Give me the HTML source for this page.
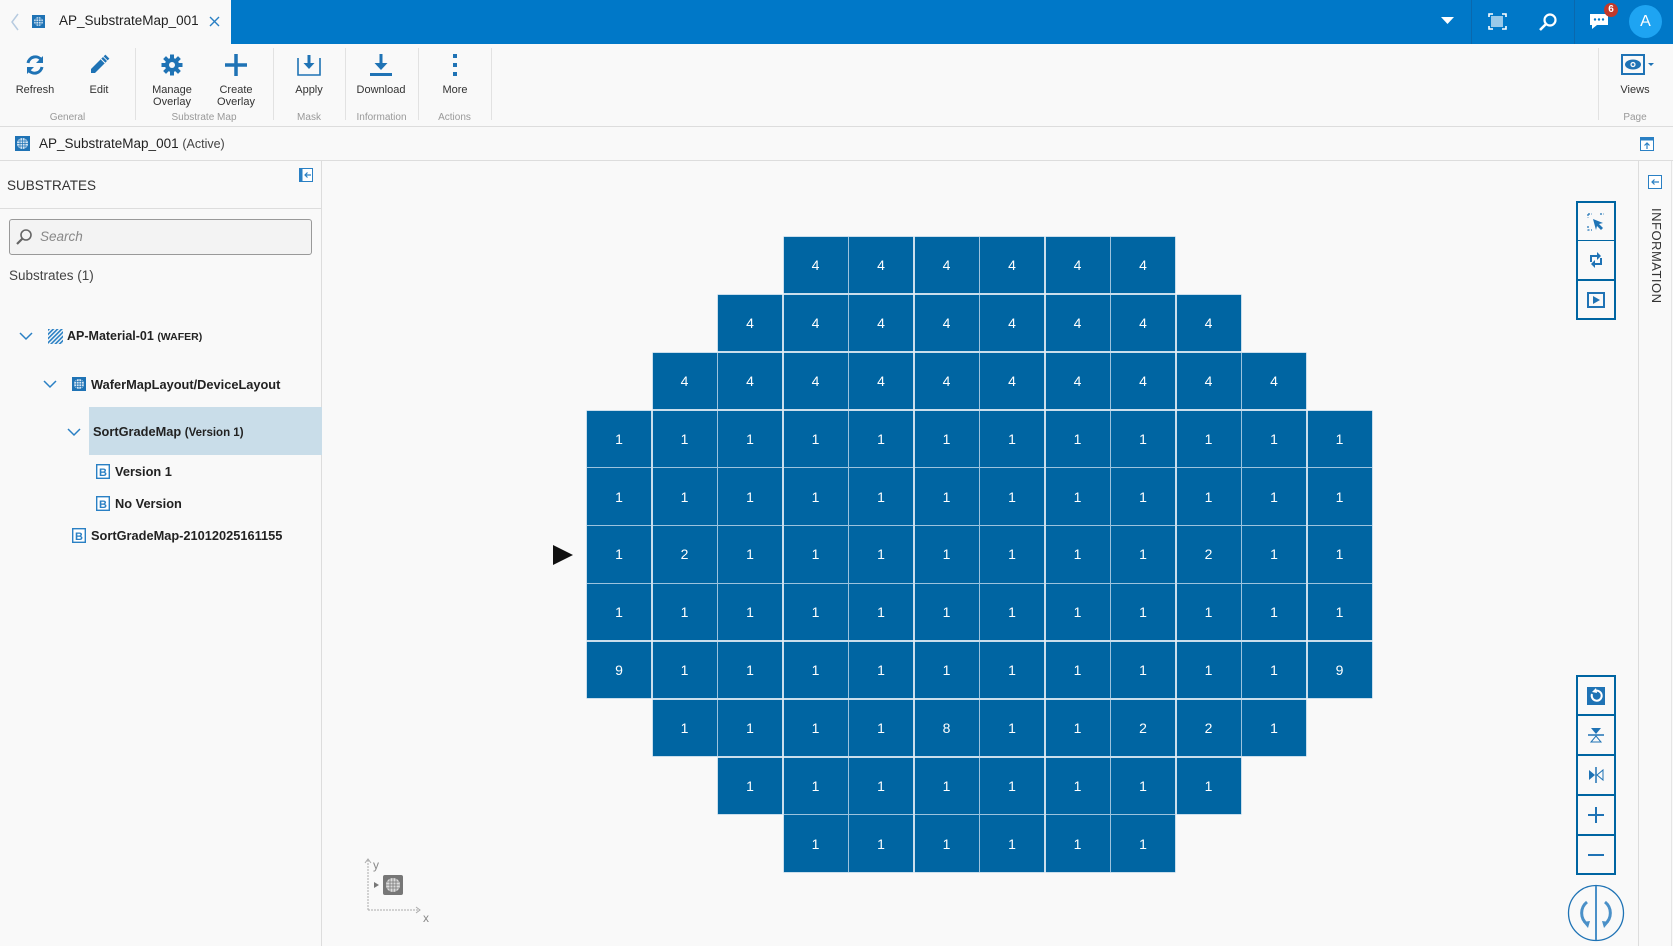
<!DOCTYPE html>
<html><head><meta charset="utf-8">
<style>
*{box-sizing:border-box;margin:0;padding:0}
body{width:1673px;height:946px;overflow:hidden;background:#f9f9f9;font-family:"Liberation Sans","DejaVu Sans",sans-serif;color:#222;position:relative}
.abs{position:absolute}
#top{left:0;top:0;width:1673px;height:44px;background:#0078c8}
#tab{left:0;top:0;width:231px;height:44px;background:#f9f9f9}
#tb{left:0;top:44px;width:1673px;height:83px;background:#f9f9f9;border-bottom:1px solid #ddd}
.btn{position:absolute;top:10px;width:70px;text-align:center;font-size:11px;line-height:12px;color:#333}
.btn svg{display:block;margin:0 auto 8px}
.grp{position:absolute;top:68px;font-size:10px;color:#999;text-align:center}
.div{position:absolute;top:4px;width:1px;height:72px;background:#e2e2e2}
#crumb{left:0;top:128px;width:1673px;height:33px;border-bottom:1px solid #ddd}
#left{left:0;top:161px;width:322px;height:785px;border-right:1px solid #ddd;background:#f9f9f9}
.t{position:absolute;font-size:14px;white-space:nowrap;color:#222}
.tb{font-weight:bold;font-size:12.8px}
#grid{position:absolute;left:587px;top:237px;display:grid;grid-template-columns:repeat(12,64px);grid-auto-rows:56.3px;column-gap:1.5px;row-gap:1.55px}
#grid b{background:#0065a2;color:#fff;font-weight:normal;font-size:14px;display:flex;align-items:center;justify-content:center;box-shadow:0 0 0 .5px #9cc3de}
#grid i{display:block}
.tool{position:absolute;left:1576px;width:40px;height:40px;border:2px solid #0065a2;background:#f9f9f9;border-top-width:1px;border-bottom-width:1px;display:flex;align-items:center;justify-content:center}
</style></head><body>
<div id="top" class="abs"></div>
<div id="tab" class="abs">
<svg class="abs" style="left:10px;top:13px" width="10" height="18"><path d="M8 1 L2 9 L8 17" stroke="#b7cbe0" stroke-width="1.5" fill="none"/></svg>
<svg class="abs" style="left:32px;top:15px" width="13" height="13"><rect width="13" height="13" fill="#1f73b5"/><circle cx="6.5" cy="6.5" r="4.5" fill="#cfe2f2"/><path d="M2 6.5h9M6.5 2v9M3 4h7M3 9h7M4 2.5v8M9 2.5v8" stroke="#1f73b5" stroke-width=".7"/></svg>
<div class="t" style="left:59px;top:13px;font-size:13.5px">AP_SubstrateMap_001</div>
<svg class="abs" style="left:209px;top:16px" width="11" height="11"><path d="M1 1L10 10M10 1L1 10" stroke="#2a7fc4" stroke-width="1.4"/></svg>
</div>
<svg class="abs" style="left:1441px;top:17px" width="13" height="8"><path d="M0 0H13L6.5 7z" fill="#fff"/></svg>
<div class="abs" style="left:1471px;top:0;width:1px;height:44px;background:#0a68ad"></div>
<svg class="abs" style="left:1488px;top:13px" width="19" height="17"><path d="M1 4V1h4M14 1h4v3M18 13v3h-4M5 16H1v-3" stroke="#fff" stroke-width="1.6" fill="none"/><path d="M4 3v11M6 3v11M8 3v11M10 3v11M12 3v11M14 3v11" stroke="#fff" stroke-width="1.2"/></svg>
<svg class="abs" style="left:1538px;top:12px" width="20" height="20"><circle cx="12" cy="8" r="5.5" stroke="#fff" stroke-width="2.2" fill="none"/><path d="M8 12L2 18" stroke="#fff" stroke-width="2.6"/></svg>
<div class="abs" style="left:1574px;top:0;width:1px;height:44px;background:#0a68ad"></div>
<svg class="abs" style="left:1589px;top:13px" width="20" height="18"><path d="M1 1h18v11H8l-5 4v-4H1z" fill="#fff"/><circle cx="6" cy="6.5" r="1.2" fill="#0078c8"/><circle cx="10" cy="6.5" r="1.2" fill="#0078c8"/><circle cx="14" cy="6.5" r="1.2" fill="#0078c8"/></svg>
<div class="abs" style="left:1604px;top:3px;width:14px;height:14px;border-radius:7px;background:#c0392b;color:#fff;font-size:10px;text-align:center;line-height:14px;font-weight:bold">6</div>
<div class="abs" style="left:1629px;top:5px;width:33px;height:33px;border-radius:17px;background:#1ea4f2;color:#fff;font-size:16px;text-align:center;line-height:33px">A</div>

<div id="tb" class="abs">
<div class="btn" style="left:0"><svg width="22" height="22" viewBox="0 0 22 22"><path d="M4 9A7.5 7.5 0 0 1 17.5 6" stroke="#1f73b5" stroke-width="3" fill="none"/><path d="M19 2v7h-7z" fill="#1f73b5"/><path d="M18 13A7.5 7.5 0 0 1 4.5 16" stroke="#1f73b5" stroke-width="3" fill="none"/><path d="M3 20v-7h7z" fill="#1f73b5"/></svg>Refresh</div>
<div class="btn" style="left:64px"><svg width="22" height="22" viewBox="0 0 22 22"><path d="M3 15L15 3l4 4L7 19H3z" fill="#1f73b5"/><path d="M16.5 1.5l4 4" stroke="#1f73b5" stroke-width="2.5"/><path d="M13 5l4 4" stroke="#f9f9f9" stroke-width="1"/></svg>Edit</div>
<div class="div" style="left:135px"></div>
<div class="btn" style="left:137px"><svg width="22" height="22" viewBox="0 0 22 22"><g fill="#1f73b5"><circle cx="11" cy="11" r="7"/><rect x="9" y="0.5" width="4" height="21"/><rect x="0.5" y="9" width="21" height="4"/><rect x="9" y="0.5" width="4" height="21" transform="rotate(45 11 11)"/><rect x="9" y="0.5" width="4" height="21" transform="rotate(-45 11 11)"/></g><circle cx="11" cy="11" r="3" fill="#f9f9f9"/></svg>Manage<br>Overlay</div>
<div class="btn" style="left:201px"><svg width="22" height="22" viewBox="0 0 22 22"><path d="M11 0v22M0 11h22" stroke="#1f73b5" stroke-width="3.5"/></svg>Create<br>Overlay</div>
<div class="div" style="left:273px"></div>
<div class="btn" style="left:274px"><svg width="24" height="22" viewBox="0 0 24 22"><path d="M1 4v17h22V4" stroke="#1f73b5" stroke-width="1.6" fill="none"/><path d="M12 1v10" stroke="#1f73b5" stroke-width="3"/><path d="M6.5 9h11L12 15z" fill="#1f73b5"/></svg>Apply</div>
<div class="div" style="left:345px"></div>
<div class="btn" style="left:346px"><svg width="24" height="22" viewBox="0 0 24 22"><path d="M12 0v12" stroke="#1f73b5" stroke-width="3"/><path d="M5.5 9h13L12 16z" fill="#1f73b5"/><rect x="1" y="19" width="22" height="3" fill="#1f73b5"/></svg>Download</div>
<div class="div" style="left:418px"></div>
<div class="btn" style="left:420px"><svg width="22" height="22" viewBox="0 0 22 22"><g fill="#1f73b5"><rect x="9" y="0" width="4" height="4"/><rect x="9" y="9" width="4" height="4"/><rect x="9" y="18" width="4" height="4"/></g></svg>More</div>
<div class="div" style="left:491px"></div>
<div class="grp" style="left:0;width:135px">General</div>
<div class="grp" style="left:135px;width:138px">Substrate Map</div>
<div class="grp" style="left:273px;width:72px">Mask</div>
<div class="grp" style="left:345px;width:73px">Information</div>
<div class="grp" style="left:418px;width:73px">Actions</div>
<div class="div" style="left:1598px"></div>
<div class="btn" style="left:1600px;width:70px"><svg width="38" height="22" viewBox="0 0 38 22"><rect x="6" y="1" width="22" height="19" fill="none" stroke="#1f73b5" stroke-width="2"/><ellipse cx="17" cy="10.5" rx="8" ry="5" fill="#1f73b5"/><circle cx="17" cy="10.5" r="2.6" fill="#f9f9f9"/><circle cx="17" cy="10.5" r="1.3" fill="#1f73b5"/><path d="M32 9h6l-3 3z" fill="#1f73b5"/></svg>Views</div>
<div class="grp" style="left:1600px;width:70px">Page</div>
</div>

<div id="crumb" class="abs">
<svg class="abs" style="left:15px;top:8px" width="15" height="15"><rect width="15" height="15" fill="#1f73b5"/><circle cx="7.5" cy="7.5" r="5.5" fill="#d6e6f3"/><path d="M2 7.5h11M7.5 2v11M3 5h9M3 10h9M5 2.5v10M10 2.5v10" stroke="#1f73b5" stroke-width=".7"/></svg>
<div class="t" style="left:39px;top:8px;font-size:13.5px">AP_SubstrateMap_001 <span style="font-size:12.5px;color:#444">(Active)</span></div>
<svg class="abs" style="left:1640px;top:9px" width="14" height="14"><rect x=".5" y=".5" width="13" height="13" fill="#fff" stroke="#2a80c4"/><rect x=".5" y=".5" width="13" height="3" fill="#2a80c4"/><path d="M7 12V6M4.5 8.5L7 6l2.5 2.5" stroke="#2a80c4" stroke-width="1.2" fill="none"/></svg>
</div>

<div id="left" class="abs">
<div class="t" style="left:7px;top:17px;font-size:13.5px;color:#333">SUBSTRATES</div>
<svg class="abs" style="left:299px;top:7px" width="14" height="14"><rect x=".5" y=".5" width="13" height="13" fill="#fff" stroke="#2a80c4"/><rect x=".5" y=".5" width="3" height="13" fill="#2a80c4"/><path d="M12 7H6M8.5 4.5L6 7l2.5 2.5" stroke="#2a80c4" stroke-width="1.2" fill="none"/></svg>
<div class="abs" style="left:0;top:47px;width:322px;height:1px;background:#ddd"></div>
<div class="abs" style="left:9px;top:58px;width:303px;height:36px;border:1px solid #999;border-radius:3px;background:#f3f3f3"></div>
<svg class="abs" style="left:15px;top:67px" width="18" height="18"><circle cx="11" cy="7" r="5" stroke="#666" stroke-width="1.6" fill="none"/><path d="M7.5 10.5L2 16" stroke="#666" stroke-width="2.2"/></svg>
<div class="t" style="left:40px;top:68px;font-style:italic;color:#888;font-size:13.5px">Search</div>
<div class="t" style="left:9px;top:107px;font-size:13.5px;color:#444">Substrates (1)</div>

<svg class="abs" style="left:19px;top:171px" width="14" height="9"><path d="M1 1l6 6 6-6" stroke="#2a80c4" stroke-width="1.5" fill="none"/></svg>
<svg class="abs" style="left:48px;top:168px" width="15" height="15"><defs><pattern id="h" width="3" height="3" patternUnits="userSpaceOnUse" patternTransform="rotate(45)"><rect width="1.6" height="3" fill="#2a80c4"/></pattern></defs><rect width="15" height="15" fill="url(#h)"/></svg>
<div class="t tb" style="left:67px;top:168px;font-size:12.5px">AP-Material-01 <span style="font-size:10.5px">(WAFER)</span></div>

<svg class="abs" style="left:43px;top:219px" width="14" height="9"><path d="M1 1l6 6 6-6" stroke="#2a80c4" stroke-width="1.5" fill="none"/></svg>
<svg class="abs" style="left:72px;top:216px" width="14" height="14"><rect width="14" height="14" fill="#1f73b5"/><circle cx="7" cy="7" r="5" fill="#d6e6f3"/><path d="M2 7h10M7 2v10M3 4.5h8M3 9.5h8M4.5 2.5v9M9.5 2.5v9" stroke="#1f73b5" stroke-width=".7"/></svg>
<div class="t tb" style="left:91px;top:216px">WaferMapLayout/DeviceLayout</div>

<div class="abs" style="left:89px;top:246px;width:233px;height:48px;background:#c9dde9"></div>
<svg class="abs" style="left:67px;top:267px" width="14" height="9"><path d="M1 1l6 6 6-6" stroke="#2a80c4" stroke-width="1.5" fill="none"/></svg>
<div class="t tb" style="left:93px;top:263px">SortGradeMap <span style="font-size:11.5px">(Version 1)</span></div>

<svg class="abs" style="left:96px;top:303px" width="14" height="15"><rect x=".7" y=".7" width="12.6" height="13.6" fill="#fff" stroke="#2a80c4" stroke-width="1.4"/><text x="7" y="12" font-size="11" font-weight="bold" text-anchor="middle" fill="#2a80c4" font-family="Liberation Sans">B</text></svg>
<div class="t tb" style="left:115px;top:303px">Version 1</div>
<svg class="abs" style="left:96px;top:335px" width="14" height="15"><rect x=".7" y=".7" width="12.6" height="13.6" fill="#fff" stroke="#2a80c4" stroke-width="1.4"/><text x="7" y="12" font-size="11" font-weight="bold" text-anchor="middle" fill="#2a80c4" font-family="Liberation Sans">B</text></svg>
<div class="t tb" style="left:115px;top:335px">No Version</div>
<svg class="abs" style="left:72px;top:367px" width="14" height="15"><rect x=".7" y=".7" width="12.6" height="13.6" fill="#fff" stroke="#2a80c4" stroke-width="1.4"/><text x="7" y="12" font-size="11" font-weight="bold" text-anchor="middle" fill="#2a80c4" font-family="Liberation Sans">B</text></svg>
<div class="t tb" style="left:91px;top:367px">SortGradeMap-21012025161155</div>
</div>

<div id="grid">
<i></i><i></i><i></i><b>4</b><b>4</b><b>4</b><b>4</b><b>4</b><b>4</b><i></i><i></i><i></i>
<i></i><i></i><b>4</b><b>4</b><b>4</b><b>4</b><b>4</b><b>4</b><b>4</b><b>4</b><i></i><i></i>
<i></i><b>4</b><b>4</b><b>4</b><b>4</b><b>4</b><b>4</b><b>4</b><b>4</b><b>4</b><b>4</b><i></i>
<b>1</b><b>1</b><b>1</b><b>1</b><b>1</b><b>1</b><b>1</b><b>1</b><b>1</b><b>1</b><b>1</b><b>1</b>
<b>1</b><b>1</b><b>1</b><b>1</b><b>1</b><b>1</b><b>1</b><b>1</b><b>1</b><b>1</b><b>1</b><b>1</b>
<b>1</b><b>2</b><b>1</b><b>1</b><b>1</b><b>1</b><b>1</b><b>1</b><b>1</b><b>2</b><b>1</b><b>1</b>
<b>1</b><b>1</b><b>1</b><b>1</b><b>1</b><b>1</b><b>1</b><b>1</b><b>1</b><b>1</b><b>1</b><b>1</b>
<b>9</b><b>1</b><b>1</b><b>1</b><b>1</b><b>1</b><b>1</b><b>1</b><b>1</b><b>1</b><b>1</b><b>9</b>
<i></i><b>1</b><b>1</b><b>1</b><b>1</b><b>8</b><b>1</b><b>1</b><b>2</b><b>2</b><b>1</b><i></i>
<i></i><i></i><b>1</b><b>1</b><b>1</b><b>1</b><b>1</b><b>1</b><b>1</b><b>1</b><i></i><i></i>
<i></i><i></i><i></i><b>1</b><b>1</b><b>1</b><b>1</b><b>1</b><b>1</b><i></i><i></i><i></i>
</div>
<svg class="abs" style="left:553px;top:545px" width="21" height="21"><path d="M0 0L20 10L0 20z" fill="#111"/></svg>

<svg class="abs" style="left:355px;top:855px" width="80" height="70"><path d="M13 55V4M13 55h52" stroke="#aaa" stroke-width="1" stroke-dasharray="2 1" fill="none"/><path d="M10 8l3-4 3 4M61 52l4 3-4 3" stroke="#aaa" fill="none"/><path d="M19 27l5 3-5 3z" fill="#777"/><rect x="28" y="20" width="20" height="20" rx="2" fill="#777"/><circle cx="38" cy="30" r="7" fill="#ddd"/><path d="M31 30h14M38 23v14M32 27h12M32 33h12M35 23.5v13M41 23.5v13" stroke="#777" stroke-width=".8"/><text x="18" y="14" font-size="12" fill="#888" font-family="Liberation Sans">y</text><text x="68" y="67" font-size="12" fill="#888" font-family="Liberation Sans">x</text></svg>

<div class="abs" style="left:1638px;top:161px;width:1px;height:785px;background:#ddd"></div>
<div class="abs" style="left:1671px;top:161px;width:1px;height:785px;background:#e5e5e5"></div>
<svg class="abs" style="left:1648px;top:175px" width="14" height="14"><rect x=".5" y=".5" width="13" height="13" fill="#fff" stroke="#2a80c4"/><path d="M11 7H4M6.5 4.5L4 7l2.5 2.5" stroke="#2a80c4" stroke-width="1.2" fill="none"/></svg>
<div class="abs" style="left:1649px;top:208px;writing-mode:vertical-rl;font-size:13px;letter-spacing:.5px;color:#333">INFORMATION</div>

<div class="tool" style="top:201px;border-top-width:2px"><svg width="18" height="18"><path d="M1 1h4M1 1v4M1 13v4h4M13 1h4" stroke="#1f73b5" stroke-width="1.2" stroke-dasharray="2 1.5" fill="none"/><path d="M6 6l10 4-4 1 4 4-2 2-4-4-1 4z" fill="#1f73b5"/></svg></div>
<div class="tool" style="top:240px"><svg width="16" height="18"><path d="M3 11V5h7" stroke="#1f73b5" stroke-width="2" fill="none"/><path d="M9 1l4 4-4 4z" fill="#1f73b5"/><path d="M13 7v6H6" stroke="#1f73b5" stroke-width="2" fill="none"/><path d="M7 17l-4-4 4-4z" fill="#1f73b5"/></svg></div>
<div class="tool" style="top:280px;border-bottom-width:2px"><svg width="18" height="16"><rect x="1" y="1" width="16" height="14" fill="none" stroke="#1f73b5" stroke-width="2"/><path d="M6 4l7 4-7 4z" fill="#1f73b5"/></svg></div>

<div class="tool" style="top:675px;border-top-width:2px"><svg width="18" height="18"><rect width="18" height="18" fill="#1f73b5"/><path d="M5 7a5 5 0 1 0 3-3" stroke="#fff" stroke-width="2" fill="none"/><path d="M9 1l1 5-5-1z" fill="#fff"/></svg></div>
<div class="tool" style="top:715px"><svg width="18" height="18"><path d="M4 2h10l-5 6z" fill="#1f73b5"/><path d="M1 9h16" stroke="#1f73b5" stroke-width="1.5"/><path d="M4 16h10l-5-6z" fill="none" stroke="#1f73b5"/></svg></div>
<div class="tool" style="top:755px"><svg width="18" height="18"><path d="M2 4v10l6-5z" fill="#1f73b5"/><path d="M9 1v16" stroke="#1f73b5" stroke-width="1.5"/><path d="M16 4v10l-6-5z" fill="none" stroke="#1f73b5"/></svg></div>
<div class="tool" style="top:795px"><svg width="18" height="18"><path d="M9 1v16M1 9h16" stroke="#1f73b5" stroke-width="2"/></svg></div>
<div class="tool" style="top:835px;border-bottom-width:2px"><svg width="18" height="18"><path d="M1 9h16" stroke="#1f73b5" stroke-width="2"/></svg></div>

<svg class="abs" style="left:1567px;top:884px" width="58" height="58"><circle cx="29" cy="29" r="27.5" fill="none" stroke="#1f73b5" stroke-width="1.3"/><path d="M29 2v54" stroke="#4a90c8" stroke-width="2"/><path d="M20 18a14 14 0 0 0 0 22" stroke="#4a90c8" stroke-width="3" fill="none"/><path d="M16 38l5 6 2-7z" fill="#4a90c8"/><path d="M38 18a14 14 0 0 1 0 22" stroke="#4a90c8" stroke-width="3" fill="none"/><path d="M42 38l-5 6-2-7z" fill="#4a90c8"/></svg>
</body></html>
